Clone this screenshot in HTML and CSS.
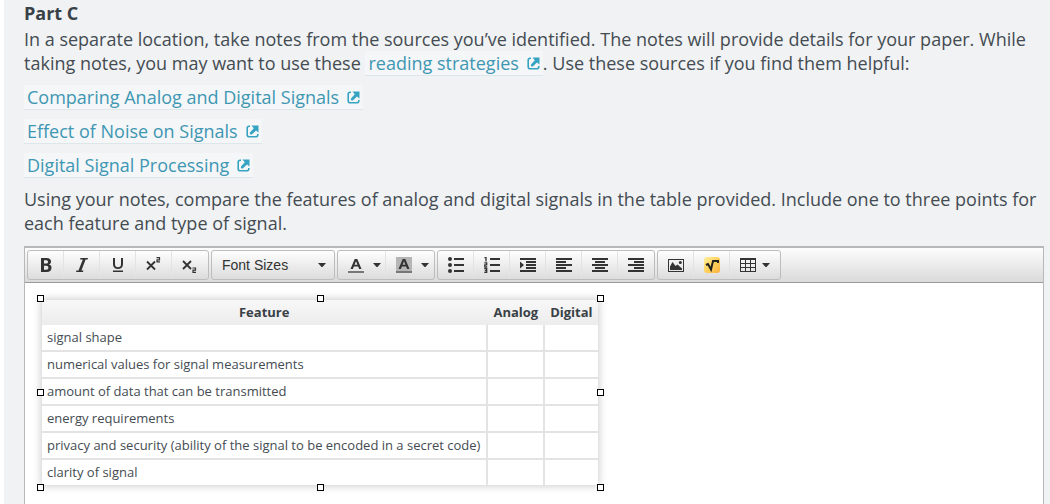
FILE: index.html
```html
<!DOCTYPE html>
<html lang="en">
<head>
<meta charset="utf-8">
<title>Part C</title>
<link rel="stylesheet" href="styles.css">
</head>
<body>
<svg class="defs" aria-hidden="true">
  <symbol id="external" viewBox="0 0 13 13">
    <path d="M4 1.200H3.200Q1.200 1.200 1.200 3.200v6.600q0 2 2 2h6.600q2 0 2-2V9" fill="none" stroke="currentColor" stroke-width="1.600"/>
    <path d="M5.500.500h7v7L10 5.400 5.800 9.600 3.800 9.200 4 7.400 7.800 3.200z" fill="currentColor"/>
  </symbol>
  <symbol id="caret" viewBox="0 0 8 5"><path d="M0 0h8L4.500 4h-1z" fill="currentColor"/></symbol>
</svg>
<main class="task">
  <h2 class="heading">Part C</h2>
  <p class="intro">In a separate location, take notes from the sources you’ve identified. The notes will provide details for your paper. While taking notes, you may want to use these <a class="source" href="#strategies">reading strategies<svg class="ext"><use href="#external"/></svg></a>. Use these sources if you find them helpful:</p>
  <p><a class="source" href="#comparing">Comparing Analog and Digital Signals<svg class="ext"><use href="#external"/></svg></a></p>
  <p><a class="source" href="#noise">Effect of Noise on Signals<svg class="ext"><use href="#external"/></svg></a></p>
  <p><a class="source" href="#processing">Digital Signal Processing<svg class="ext"><use href="#external"/></svg></a></p>
  <p>Using your notes, compare the features of analog and digital signals in the table provided. Include one to three points for each feature and type of signal.</p>

  <section class="editor">
    <div class="toolbar" role="toolbar" aria-label="Formatting">
      <div class="group">
        <button class="tool" type="button" aria-label="Bold"><svg class="glyph" viewBox="0 0 16 16"><path fill-rule="evenodd" d="M3 1h5.500c3 0 4.500 1.300 4.500 3.500 0 1.500-.7 2.500-2 3 1.700.4 2.500 1.500 2.500 3.200C13.500 13.500 11.700 15 8.700 15H3zM6 3.300v3.300h2c1.300 0 2-.5 2-1.700 0-1.100-.7-1.600-2-1.600zM6 8.800v3.900h2.300c1.400 0 2.100-.6 2.100-1.900S9.700 8.800 8.300 8.800z"/></svg></button>
        <button class="tool" type="button" aria-label="Italic"><svg class="glyph" viewBox="0 0 16 16"><path d="M6.500 1H14l-.4 1.500h-2L7.400 13.500h2L9 15H2l.5-1.500h2L8.800 2.500H6z"/></svg></button>
        <button class="tool" type="button" aria-label="Underline"><svg class="glyph" viewBox="0 0 16 16"><path d="M3 1h2v6c0 2.200 1 3.200 3 3.200s3-1 3-3.200V1h2v6.200c0 3.200-1.900 4.800-5 4.800s-5-1.600-5-4.800zM3 13.500h10V15H3z"/></svg></button>
        <button class="tool" type="button" aria-label="Superscript"><svg class="glyph line" viewBox="0 0 16 16"><path d="M1 4.500l8 8M9 4.500l-8 8" stroke-width="1.800"/><path d="M10.500 .600h3v2.200h-2.500v2.100h3" stroke-width="1.200"/></svg></button>
        <button class="tool" type="button" aria-label="Subscript"><svg class="glyph line" viewBox="0 0 16 16"><path d="M1 4l8 8M9 4l-8 8" stroke-width="1.800"/><path d="M10.500 11h3v2.200h-2.500v2.200h3" stroke-width="1.200"/></svg></button>
      </div>
      <div class="group sizes">
        <select class="size" aria-label="Font Sizes"><option>Font Sizes</option></select>
        <svg class="caret"><use href="#caret"/></svg>
      </div>
      <div class="group">
        <button class="tool wide" type="button" aria-label="Text color"><svg class="glyph" viewBox="0 0 16 16"><path fill-rule="evenodd" d="M6.700 2h2.600l4.200 10h-2.400l-1-2.500H5.900l-1 2.500H2.500zM8 4.300L6.600 7.800h2.800z"/><path class="bar" d="M0 14h16v2H0z"/></svg><svg class="caret"><use href="#caret"/></svg></button>
        <button class="tool wide" type="button" aria-label="Background color"><svg class="glyph" viewBox="0 0 16 16"><path class="shade" d="M0 0h16v16H0z"/><path fill-rule="evenodd" d="M6.700 2h2.600l4.200 10h-2.400l-1-2.500H5.900l-1 2.500H2.500zM8 4.300L6.600 7.800h2.800z"/><path class="bar" d="M0 14h16v2H0z"/></svg><svg class="caret"><use href="#caret"/></svg></button>
      </div>
      <div class="group">
        <button class="tool" type="button" aria-label="Bullet list"><svg class="glyph" viewBox="0 0 16 16"><circle cx="2" cy="2" r="2"/><circle cx="2" cy="8" r="2"/><circle cx="2" cy="14" r="2"/><path d="M6 1h10v2H6zM6 7h10v2H6zM6 13h10v2H6z"/></svg></button>
        <button class="tool" type="button" aria-label="Numbered list"><svg class="glyph" viewBox="0 0 16 16"><path d="M6 1h10v2H6zM6 7h10v2H6zM6 13h10v2H6z"/><path class="digits" d="M.5.500H2v4M.3 5.800h2.400v2H.8v2h2.400M.3 11.500h2.400v4H.3M.8 13.500h2"/></svg></button>
        <button class="tool" type="button" aria-label="Indent"><svg class="glyph" viewBox="0 0 16 16"><path d="M0 1h16v2H0zM6 4h10v2H6zM6 7h10v2H6zM6 10h10v2H6zM0 13h16v2H0zM0 4.500L4 8l-4 3.500z"/></svg></button>
        <button class="tool" type="button" aria-label="Align left"><svg class="glyph" viewBox="0 0 16 16"><path d="M0 1h16v2H0zM0 4h10v2H0zM0 7h16v2H0zM0 10h10v2H0zM0 13h16v2H0z"/></svg></button>
        <button class="tool" type="button" aria-label="Align center"><svg class="glyph" viewBox="0 0 16 16"><path d="M0 1h16v2H0zM3 4h10v2H3zM0 7h16v2H0zM3 10h10v2H3zM0 13h16v2H0z"/></svg></button>
        <button class="tool" type="button" aria-label="Align right"><svg class="glyph" viewBox="0 0 16 16"><path d="M0 1h16v2H0zM6 4h10v2H6zM0 7h16v2H0zM6 10h10v2H6zM0 13h16v2H0z"/></svg></button>
      </div>
      <div class="group">
        <button class="tool" type="button" aria-label="Insert image"><svg class="glyph" viewBox="0 0 16 16"><path fill-rule="evenodd" d="M0 2h16v13H0zM1 3v11h14V3z"/><path d="M2 13V9.500L4.500 5l3 4L9.500 7.500l4.500 4V13z"/><circle cx="12.300" cy="5.500" r="1.500"/></svg></button>
        <button class="tool" type="button" aria-label="Insert formula"><svg class="glyph" viewBox="0 0 16 16"><defs><linearGradient id="gold" x2="1" y2="1"><stop stop-color="#fff0a0"/><stop offset=".5" stop-color="#ffd25c"/><stop offset="1" stop-color="#fbb040"/></linearGradient></defs><rect width="16" height="16" rx="3" fill="url(#gold)"/><path class="root" d="M2 8l2-1 3 5.500L9 4h5v2"/></svg></button>
        <button class="tool grid" type="button" aria-label="Table"><svg class="glyph" viewBox="0 0 16 16"><path fill-rule="evenodd" d="M0 1h16v14H0zM1 3v3h4V3zM6 3v3h4V3zM11 3v3h4V3zM1 7v3h4V7zM6 7v3h4V7zM11 7v3h4V7zM1 11v3h4v-3zM6 11v3h4v-3zM11 11v3h4v-3z"/></svg><svg class="caret"><use href="#caret"/></svg></button>
      </div>
    </div>
    <div class="content">
      <div class="selected">
        <table class="features">
          <thead><tr><th scope="col">Feature</th><th scope="col">Analog</th><th scope="col">Digital</th></tr></thead>
          <tbody>
            <tr><td>signal shape</td><td></td><td></td></tr>
            <tr><td>numerical values for signal measurements</td><td></td><td></td></tr>
            <tr><td>amount of data that can be transmitted</td><td></td><td></td></tr>
            <tr><td>energy requirements</td><td></td><td></td></tr>
            <tr><td>privacy and security (ability of the signal to be encoded in a secret code)</td><td></td><td></td></tr>
            <tr><td>clarity of signal</td><td></td><td></td></tr>
          </tbody>
        </table>
        <span class="handle top left"></span><span class="handle top center"></span><span class="handle top right"></span>
        <span class="handle middle left"></span><span class="handle middle right"></span>
        <span class="handle bottom left"></span><span class="handle bottom center"></span><span class="handle bottom right"></span>
      </div>
    </div>
  </section>
</main>
</body>
</html>
```
FILE: styles.css
```css
* { box-sizing: border-box; }
html { background: #fff; }
body {
  margin: 0 0 0 4px;
  min-height: 100vh;
  display: flex;
  background: #f0f2f4;
  color: #444c52;
  font: 18px/24px "Open Sans", "Noto Sans", sans-serif;
}
.defs { position: absolute; width: 0; height: 0; }
.task {
  flex: 1;
  min-width: 0;
  display: flex;
  flex-direction: column;
  padding: 1px 6px 0 20px;
}
.heading { margin: 0 0 2px; font-size: 18px; font-weight: 700; color: #394147; }
p { margin: 0 0 10px; }
.source {
  padding: 0 3px;
  background: #f4f6f7;
  box-shadow: 0 1px #dde7e9;
  color: #3e97b3;
  text-decoration: none;
}
.ext { width: 13px; height: 13px; margin-left: 8px; color: #35a3c1; }

.editor {
  flex: 1;
  display: flex;
  flex-direction: column;
  margin-top: 1px;
  border: 1px solid #b8b8b8;
  border-top-width: 2px;
  border-bottom: 0;
  background: #fff;
}
.toolbar {
  display: flex;
  flex-wrap: wrap;
  gap: 2px;
  padding: 2px;
  border-bottom: 1px solid #9a9a9a;
  background: linear-gradient(#fdfdfd, #dadada);
}
.group {
  display: flex;
  position: relative;
  height: 30px;
  border: 1px solid #bdbdbd;
  border-radius: 3px;
  background: linear-gradient(#fefefe, #dcdcdc);
}
.tool {
  display: flex;
  align-items: center;
  justify-content: center;
  width: 36px;
  padding: 0;
  border: 0;
  border-right: 1px solid #e3e3e3;
  background: none;
  color: #333;
}
.tool:last-child { border-right-color: transparent; }
.wide, .grid { justify-content: flex-start; padding-left: 10px; }
.wide { width: 48px; gap: 9px; }
.grid { width: 50px; gap: 6px; }
.glyph { flex: none; width: 16px; height: 16px; fill: #333; }
.line { fill: none; stroke: #333; }
.bar { fill: #777; }
.shade { fill: #b5b5b5; }
.digits { fill: none; stroke: #333; stroke-width: 1.300; }
.root { fill: none; stroke: #222; stroke-width: 2; }
.caret { flex: none; width: 8px; height: 5px; color: #333; }
.size {
  appearance: none;
  width: 122px;
  padding: 0 10px;
  border: 0;
  background: none;
  color: #333;
  font: 14px/28px "Liberation Sans", Arial, sans-serif;
}
.sizes .caret { position: absolute; right: 8px; top: 12px; pointer-events: none; }

.content { padding: 16px; font-size: 13px; }
.selected { position: relative; width: fit-content; padding: 1px; }
.features {
  border-spacing: 0;
  background: #fff;
  box-shadow: 0 0 8px 1px #ccc;
}
.features th {
  height: 25px;
  padding: 0 5px;
  background: linear-gradient(#f8f8f8, #ececec);
  line-height: 25px;
  color: #394147;
}
.features th:not(:last-child) { padding-right: 7px; }
.features td {
  height: 27px;
  padding: 0 5px;
  border: solid #e3e3e3;
  border-width: 0 2px 2px 0;
  line-height: 25px;
}
.features td:first-child { padding-right: 6px; }
.features td:last-child { border-right: 0; }
.features tr:last-child td { height: 25px; border-bottom: 0; }
.handle {
  position: absolute;
  width: 7px;
  height: 7px;
  border: 1px solid #000;
  background: #fff;
}
.top { top: -4px; }
.middle { top: calc(50% - 4px); }
.bottom { bottom: -5px; }
.left { left: -4px; }
.center { left: calc(50% - 3px); }
.right { right: -5px; }
```
